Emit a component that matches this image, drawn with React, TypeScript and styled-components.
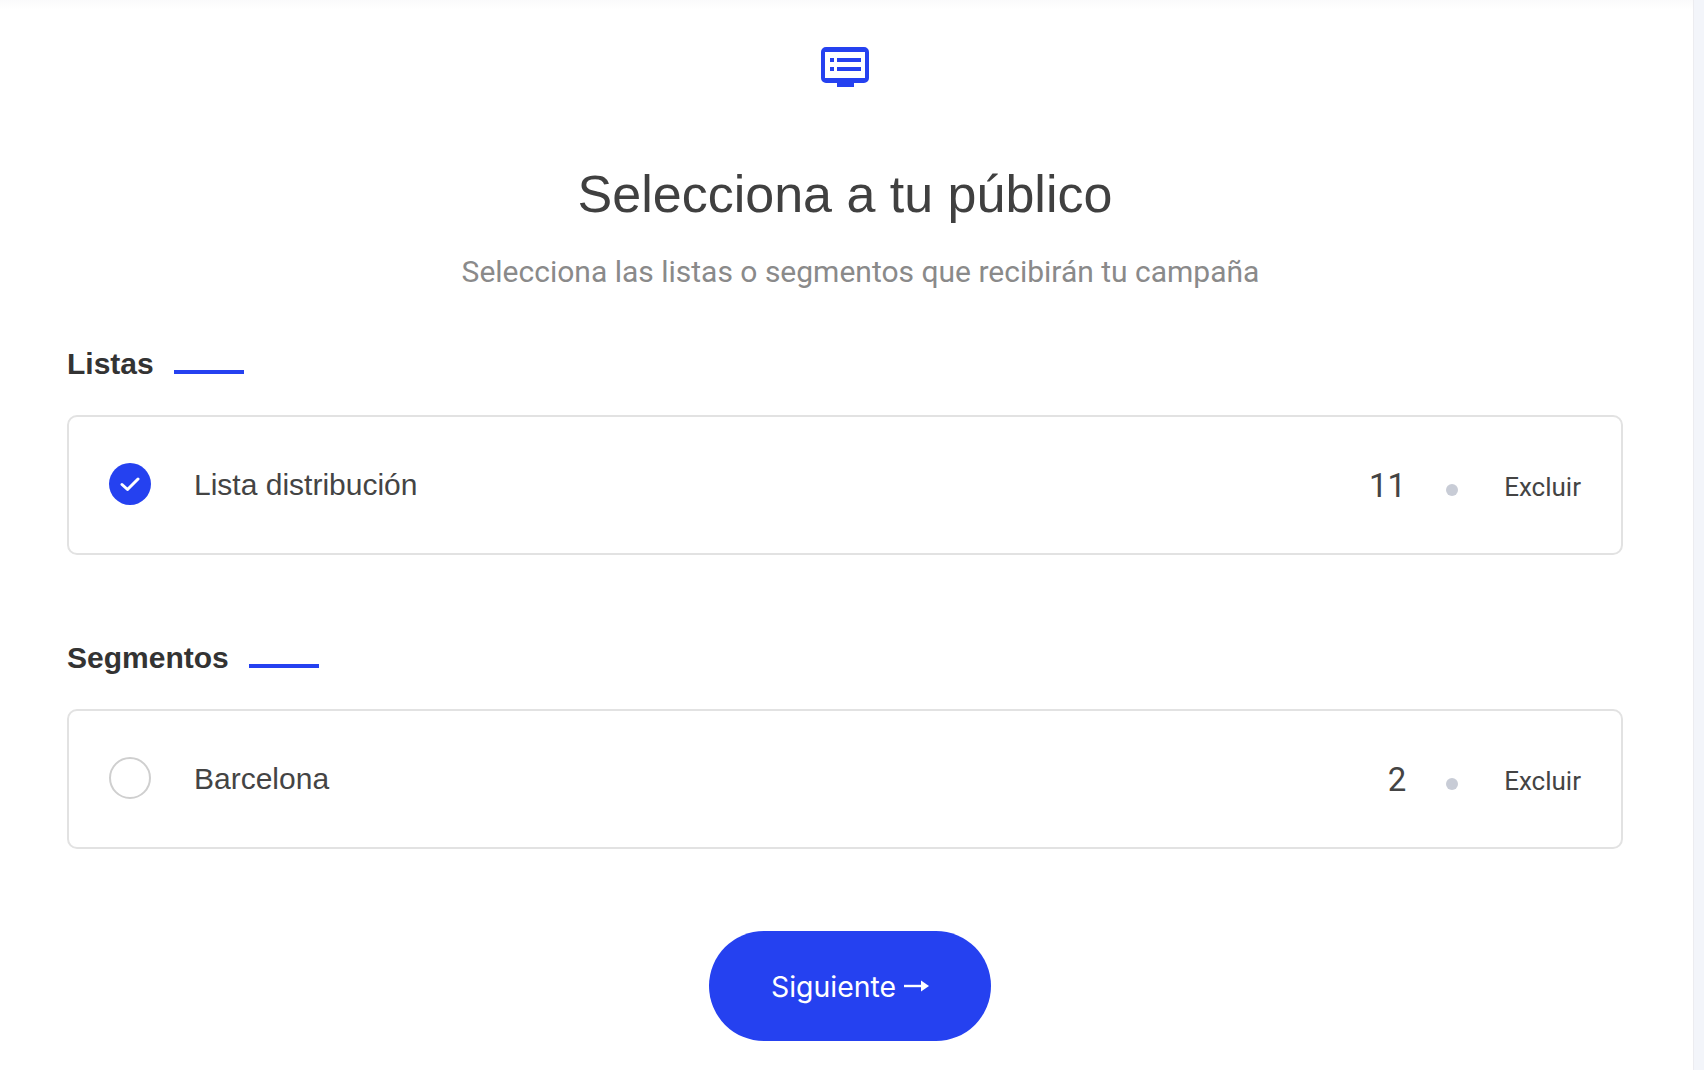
import { createGlobalStyle } from 'styled-components';
import styled from 'styled-components';

const GlobalStyle = createGlobalStyle`
  html, body {
    margin: 0;
    padding: 0;
    background: #f3f5fa;
    overflow: hidden;
  }
`;

const Page = styled.div`
  display: flex;
  width: 1704px;
  height: 1070px;
  overflow: hidden;
`;

const Main = styled.main`
  display: flex;
  flex-direction: column;
  width: 1694px;
  height: 1070px;
  box-sizing: border-box;
  padding: 47px 70px 0 67px;
  background: linear-gradient(#fafafb, #fff 10px);
  border-right: 1px solid #ececf0;
`;

const IconRow = styled.div`
  display: flex;
  justify-content: center;
  height: 40px;
`;

const Title = styled.h1`
  margin: 77px 0 0;
  font-family: 'Liberation Sans', Arial, sans-serif;
  font-weight: 400;
  font-size: 52px;
  line-height: 60px;
  color: #404040;
  text-align: center;
`;

const Subtitle = styled.p`
  margin: 28px 0 0 31px;
  font-family: Roboto, sans-serif;
  font-size: 30px;
  line-height: 40px;
  color: #8a8a8a;
  text-align: center;
`;

const SectionHeader = styled.div<{ $top: number }>`
  display: flex;
  align-items: flex-end;
  gap: 20px;
  margin-top: ${(p) => p.$top}px;
  height: 36px;
`;

const SectionTitle = styled.h2`
  margin: 0;
  font-family: 'Liberation Sans', Arial, sans-serif;
  font-weight: 700;
  font-size: 30px;
  line-height: 36px;
  color: #333;
`;

const SectionRule = styled.span`
  width: 70px;
  height: 4px;
  margin-bottom: 8px;
  background: #2541f0;
`;

const Card = styled.div`
  display: flex;
  align-items: center;
  height: 140px;
  box-sizing: border-box;
  margin-top: 33px;
  padding: 0 40px;
  border: 2px solid #e2e2e2;
  border-radius: 10px;
`;

const Radio = styled.span<{ $checked?: boolean }>`
  display: flex;
  align-items: center;
  justify-content: center;
  flex: none;
  width: 42px;
  height: 42px;
  margin-bottom: 2px;
  box-sizing: border-box;
  border-radius: 50%;
  background: ${(p) => (p.$checked ? '#2541f0' : '#fff')};
  border: ${(p) => (p.$checked ? 'none' : '2px solid #cfcfcf')};
`;

const ItemName = styled.span`
  flex: 1;
  margin-left: 43px;
  font-family: 'Liberation Sans', Arial, sans-serif;
  font-size: 30px;
  color: #444;
`;

const Count = styled.span`
  font-family: Roboto, sans-serif;
  font-size: 33px;
  color: #444;
`;

const Dot = styled.span`
  width: 12px;
  height: 12px;
  margin: 9px 46px 0 40px;
  border-radius: 50%;
  background: #c8ccd6;
`;

const Exclude = styled.span`
  margin-top: 4px;
  font-family: Roboto, sans-serif;
  font-size: 26px;
  color: #444;
`;

const NextButton = styled.button`
  display: flex;
  align-items: center;
  justify-content: center;
  gap: 8px;
  align-self: center;
  width: 282px;
  height: 110px;
  margin: 82px 0 0 10px;
  border: none;
  border-radius: 55px;
  background: #2541f0;
  color: #fff;
  font-family: Inter, sans-serif;
  font-size: 28.4px;
`;

function ScreenIcon() {
  return (
    <svg width="48" height="40" viewBox="0 0 48 40">
      <path
        fill="#2541f0"
        fillRule="evenodd"
        d="M5 0h38a5 5 0 0 1 5 5v26a5 5 0 0 1-5 5H33v4H16v-4H5a5 5 0 0 1-5-5V5a5 5 0 0 1 5-5zm-1 5v26h40V5H4z"
      />
      <path fill="#2541f0" d="M9 11h4v4H9zM16 11h24v4H16zM9 20h4v4H9zM16 20h24v4H16z" />
    </svg>
  );
}

function CheckIcon() {
  return (
    <svg width="20" height="16" viewBox="0 0 20 16">
      <path d="M2 8.5l5.5 5L18 3" fill="none" stroke="#fff" strokeWidth="3" strokeLinecap="round" strokeLinejoin="round" />
    </svg>
  );
}

function ArrowIcon() {
  return (
    <svg width="25" height="18" viewBox="0 0 25 18">
      <path d="M0 9h22" fill="none" stroke="#fff" strokeWidth="2.4" />
      <path d="M17 3.5L25 9l-8 5.5z" fill="#fff" />
    </svg>
  );
}

export default function App() {
  return (
    <Page>
      <GlobalStyle />
      <Main>
        <IconRow>
          <ScreenIcon />
        </IconRow>
        <Title>Selecciona a tu público</Title>
        <Subtitle>Selecciona las listas o segmentos que recibirán tu campaña</Subtitle>

        <SectionHeader $top={54}>
          <SectionTitle>Listas</SectionTitle>
          <SectionRule />
        </SectionHeader>
        <Card>
          <Radio $checked>
            <CheckIcon />
          </Radio>
          <ItemName>Lista distribución</ItemName>
          <Count>11</Count>
          <Dot />
          <Exclude>Excluir</Exclude>
        </Card>

        <SectionHeader $top={85}>
          <SectionTitle>Segmentos</SectionTitle>
          <SectionRule />
        </SectionHeader>
        <Card>
          <Radio />
          <ItemName>Barcelona</ItemName>
          <Count>2</Count>
          <Dot />
          <Exclude>Excluir</Exclude>
        </Card>

        <NextButton>
          Siguiente <ArrowIcon />
        </NextButton>
      </Main>
    </Page>
  );
}
